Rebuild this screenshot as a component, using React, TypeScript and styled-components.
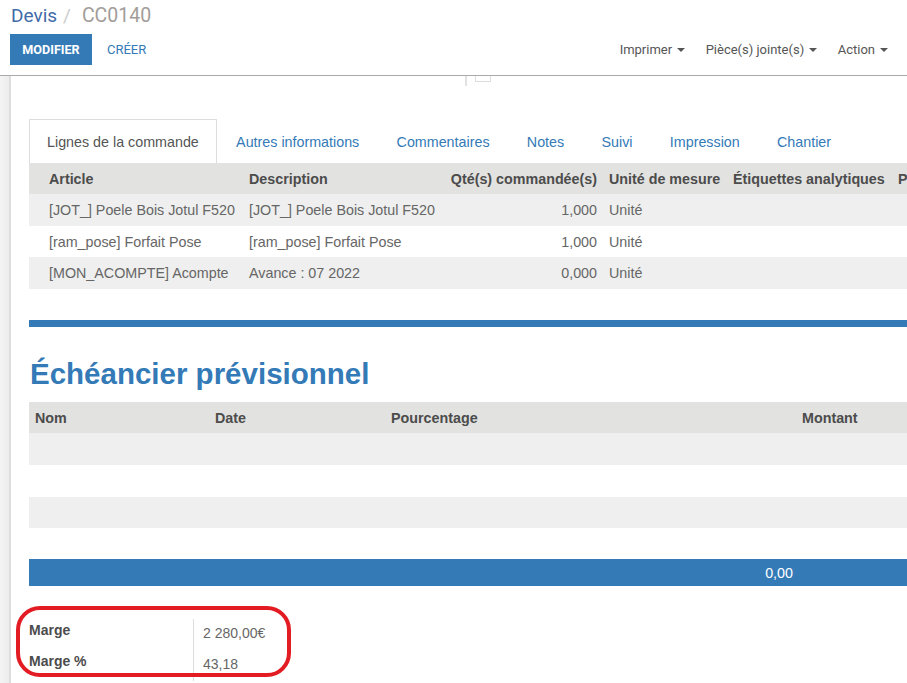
import styled, { createGlobalStyle } from 'styled-components';

const GlobalStyle = createGlobalStyle`
  html, body {
    margin: 0;
    padding: 0;
    background: #fff;
    overflow: hidden;
  }
  body {
    font-family: "Liberation Sans", Arial, sans-serif;
    font-size: 14.3px;
    color: #666;
  }
`;

const BLUE = '#337ab7';

const orderLines = [
  { article: '[JOT_] Poele Bois Jotul F520', description: '[JOT_] Poele Bois Jotul F520', qty: '1,000', uom: 'Unité' },
  { article: '[ram_pose] Forfait Pose', description: '[ram_pose] Forfait Pose', qty: '1,000', uom: 'Unité' },
  { article: '[MON_ACOMPTE] Acompte', description: 'Avance : 07 2022', qty: '0,000', uom: 'Unité' },
];

const tabs = ['Lignes de la commande', 'Autres informations', 'Commentaires', 'Notes', 'Suivi', 'Impression', 'Chantier'];

const ControlPanel = styled.header`
  height: 76px;
  box-sizing: border-box;
  border-bottom: 1px solid #aaa;
  padding: 2px 19px 0 10px;
  font-family: Roboto, "Liberation Sans", sans-serif;
`;

const Breadcrumb = styled.div`
  font-size: 19px;
  line-height: 28px;
  height: 32px;
  padding-left: 1px;
`;

const Crumb = styled.span`
  color: #3f6ba9;
`;

const Separator = styled.span`
  color: #ccc;
  margin: 0 11px 0 6px;
`;

const Current = styled.span`
  color: #a29d9a;
  font-size: 19.5px;
`;

const ButtonBar = styled.div`
  display: flex;
  align-items: center;
  height: 31px;
`;

const PrimaryButton = styled.button`
  height: 31px;
  width: 82px;
  border: none;
  background: ${BLUE};
  color: #fff;
  font-family: inherit;
  font-weight: 700;
  font-size: 12.6px;
  padding: 0;
`;

const LinkButton = styled.button`
  border: none;
  background: none;
  color: ${BLUE};
  font-family: inherit;
  font-size: 13px;
  padding: 0 0 0 15px;
`;

const Spacer = styled.div`
  flex: 1;
`;

const Dropdown = styled.span`
  display: inline-flex;
  align-items: center;
  font-size: 13px;
  color: #555;
  margin-left: 20.5px;
  &::after {
    content: '';
    margin-left: 5px;
    border-left: 4px solid transparent;
    border-right: 4px solid transparent;
    border-top: 4px solid #555;
  }
`;

const Body = styled.div`
  display: flex;
  height: 607px;
`;

const Gutter = styled.div`
  width: 9px;
  flex: none;
  background: linear-gradient(to right, #f4f4f4, #ececec);
  border-right: 2px solid #dedede;
`;

const Sheet = styled.div`
  flex: 1;
  overflow: hidden;
  padding-left: 18px;
`;

const Inner = styled.div`
  width: 1000px;
`;

const ClippedRow = styled.div`
  height: 10px;
  overflow: hidden;
  display: flex;
  align-items: flex-start;
  padding-left: 436px;
`;

const VLine = styled.div`
  width: 2px;
  height: 10px;
  background: #e2e2e2;
`;

const CheckBoxEdge = styled.div`
  width: 14px;
  height: 14px;
  margin: -10px 0 0 8px;
  border: 1px solid #ddd;
`;

const TabBar = styled.div`
  display: flex;
  margin-top: 33px;
  height: 44px;
  gap: 1.3px;
`;

const Tab = styled.div<{ $active?: boolean }>`
  display: flex;
  align-items: center;
  padding: 0 17px;
  box-sizing: border-box;
  border: 1px solid ${(p) => (p.$active ? '#ddd' : 'transparent')};
  border-bottom: none;
  color: ${(p) => (p.$active ? '#555' : BLUE)};
  background: #fff;
`;

const Grid = styled.div<{ $cols: string }>`
  display: grid;
  grid-template-columns: ${(p) => p.$cols};
`;

const HeadRow = styled(Grid)`
  background: #e2e2e0;
  height: 31px;
  align-items: center;
  font-weight: 700;
  color: #4c4c4c;
`;

const Row = styled(Grid)<{ $striped?: boolean; $h: number }>`
  background: ${(p) => (p.$striped ? '#eeefee' : '#fff')};
  height: ${(p) => p.$h}px;
  align-items: center;
`;

const Cell = styled.div<{ $right?: boolean; $first?: boolean }>`
  padding: 0 6px 0 ${(p) => (p.$first ? '20px' : '6px')};
  text-align: ${(p) => (p.$right ? 'right' : 'left')};
  white-space: nowrap;
`;

const TotalCell = styled(Cell)`
  padding-right: 3px;
`;

const BlueRule = styled.div`
  height: 7px;
  background: ${BLUE};
  margin-top: 31px;
`;

const Title = styled.h1`
  margin: 0;
  padding: 26px 0 8px 1px;
  line-height: 41px;
  font-size: 29.5px;
  font-weight: 700;
  color: ${BLUE};
`;

const FooterRow = styled(Grid)`
  height: 27px;
  background: ${BLUE};
  color: #fff;
  align-items: center;
`;

const MarginSection = styled.div`
  position: relative;
  margin-top: 33px;
  width: 300px;
`;

const MarginRow = styled.div`
  display: grid;
  grid-template-columns: 165px 1fr;
  height: 31px;
`;

const MarginLabel = styled.div`
  font-weight: 700;
  color: #4c4c4c;
  padding-top: 3px;
  font-size: 14px;
  border-right: 1px solid #ddd;
`;

const MarginValue = styled.div`
  padding: 6px 0 0 9px;
  font-size: 14px;
  color: #666;
`;

const Highlight = styled.div`
  position: absolute;
  left: -13px;
  top: -13px;
  width: 275px;
  height: 71px;
  box-sizing: border-box;
  border: 4px solid #e31b23;
  border-radius: 24px;
  pointer-events: none;
`;

const orderCols = '214px 200px 160px 124px 165px 200px';
const scheduleCols = '180px 176px 411px 233px';

export default function App() {
  return (
    <>
      <GlobalStyle />
      <ControlPanel>
        <Breadcrumb>
          <Crumb>Devis</Crumb>
          <Separator>/</Separator>
          <Current>CC0140</Current>
        </Breadcrumb>
        <ButtonBar>
          <PrimaryButton>MODIFIER</PrimaryButton>
          <LinkButton>CRÉER</LinkButton>
          <Spacer />
          <Dropdown>Imprimer</Dropdown>
          <Dropdown>Pièce(s) jointe(s)</Dropdown>
          <Dropdown>Action</Dropdown>
        </ButtonBar>
      </ControlPanel>
      <Body>
        <Gutter />
        <Sheet>
          <Inner>
            <ClippedRow>
              <VLine />
              <CheckBoxEdge />
            </ClippedRow>
            <TabBar>
              {tabs.map((t, i) => (
                <Tab key={t} $active={i === 0}>
                  {t}
                </Tab>
              ))}
            </TabBar>
            <HeadRow $cols={orderCols}>
              <Cell $first>Article</Cell>
              <Cell>Description</Cell>
              <Cell $right>Qté(s) commandée(s)</Cell>
              <Cell>Unité de mesure</Cell>
              <Cell>Étiquettes analytiques</Cell>
              <Cell>Prix unitaire</Cell>
            </HeadRow>
            {orderLines.map((l, i) => (
              <Row key={l.article} $cols={orderCols} $striped={i % 2 === 0} $h={i === 1 ? 31 : 32}>
                <Cell $first>{l.article}</Cell>
                <Cell>{l.description}</Cell>
                <Cell $right>{l.qty}</Cell>
                <Cell>{l.uom}</Cell>
                <Cell />
                <Cell />
              </Row>
            ))}
            <BlueRule />
            <Title>Échéancier prévisionnel</Title>
            <HeadRow $cols={scheduleCols}>
              <Cell>Nom</Cell>
              <Cell>Date</Cell>
              <Cell>Pourcentage</Cell>
              <Cell>Montant</Cell>
            </HeadRow>
            {[0, 1, 2, 3].map((i) => (
              <Row key={i} $cols={scheduleCols} $striped={i % 2 === 0} $h={i < 2 ? 32 : 31}>
                <Cell />
              </Row>
            ))}
            <FooterRow $cols={scheduleCols}>
              <Cell />
              <Cell />
              <TotalCell $right>0,00</TotalCell>
              <Cell />
            </FooterRow>
            <MarginSection>
              <MarginRow>
                <MarginLabel>Marge</MarginLabel>
                <MarginValue>2 280,00€</MarginValue>
              </MarginRow>
              <MarginRow>
                <MarginLabel>Marge %</MarginLabel>
                <MarginValue>43,18</MarginValue>
              </MarginRow>
              <Highlight />
            </MarginSection>
          </Inner>
        </Sheet>
      </Body>
    </>
  );
}
